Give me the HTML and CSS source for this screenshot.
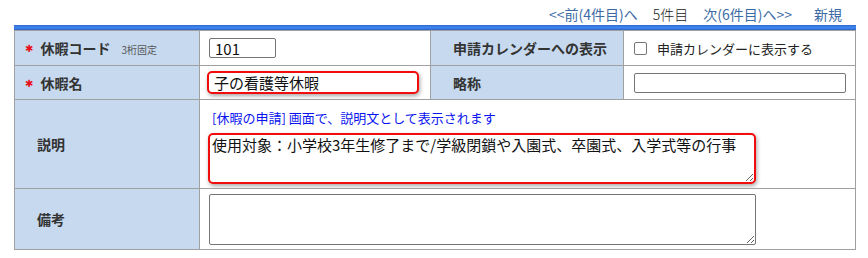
FILE: index.html
```html
<!DOCTYPE html>
<html lang="ja">
<head>
<meta charset="utf-8">
<link rel="stylesheet" href="styles.css">
</head>
<body>
<div class="page">
  <div class="nav">
    <a class="nav-link" href="#">&lt;&lt;前(4件目)へ</a>
    <span class="nav-current">5件目</span>
    <a class="nav-link" href="#">次(6件目)へ&gt;&gt;</a>
    <a class="nav-link nav-new" href="#">新規</a>
  </div>
  <div class="bar"></div>
  <table class="form">
    <colgroup>
      <col class="c1"><col class="c2"><col class="c3"><col class="c4">
    </colgroup>
    <tr class="r1">
      <th class="label req"><span class="ast">✱</span>休暇コード<span class="note">3桁固定</span></th>
      <td class="val"><input class="inp code" type="text" value="101"></td>
      <th class="label lbl3">申請カレンダーへの表示</th>
      <td class="val"><label class="chk"><span class="box"></span>申請カレンダーに表示する</label></td>
    </tr>
    <tr class="r2">
      <th class="label req"><span class="ast">✱</span>休暇名</th>
      <td class="val"><input class="inp name hl" type="text" value="子の看護等休暇"></td>
      <th class="label lbl3">略称</th>
      <td class="val"><input class="inp abbr" type="text" value=""></td>
    </tr>
    <tr class="r3">
      <th class="label">説明</th>
      <td class="val" colspan="3">
        <div class="hint">[休暇の申請] 画面で、説明文として表示されます</div>
        <textarea class="ta ta-hl">使用対象：小学校3年生修了まで/学級閉鎖や入園式、卒園式、入学式等の行事</textarea>
      </td>
    </tr>
    <tr class="r4">
      <th class="label">備考</th>
      <td class="val" colspan="3"><textarea class="ta"></textarea></td>
    </tr>
  </table>
</div>
</body>
</html>
```

FILE: styles.css
```css
html, body { margin: 0; padding: 0; background: #fff; }
body {
  font-family: "Noto Sans CJK JP", "Noto Sans", sans-serif;
  color: #333;
}
.page { padding-left: 14px; width: 842px; }
.nav {
  height: 25px;
  display: flex;
  justify-content: flex-end;
  align-items: center;
  font-size: 14px;
  line-height: 16px;
  padding-right: 14px;
  box-sizing: border-box;
  padding-top: 3px;
}
.nav-link { color: #3c6aa5; text-decoration: none; margin-left: 15px; }
.nav-current { color: #222; margin-left: 15px; font-weight: 300; }
.nav-new { margin-left: 22px; }
.bar {
  height: 5px;
  background: linear-gradient(#2e62c8, #3d86ef 40%, #3a7ce6 70%, #2b5fc2);
}
.form {
  border-collapse: collapse;
  table-layout: fixed;
  width: 842px;
  border: 1px solid #a0a0a0;
}
.form .c1 { width: 185px; }
.form .c2 { width: 231px; }
.form .c3 { width: 193px; }
.form .c4 { width: 232px; }
.form th, .form td {
  border: 1px solid #a0a0a0;
  padding: 0;
  vertical-align: middle;
}
.form tr.r1 th, .form tr.r1 td { border-top: 0; }
.r1 { height: 35px; }
.r2 { height: 34px; }
.r3 { height: 89px; }
.r4 { height: 61px; }
.label {
  background: #c6d9ef;
  text-align: left;
  font-size: 14px;
  font-weight: bold;
  color: #333;
  padding-left: 22px !important;
  white-space: nowrap;
}
.label.req { padding-left: 10px !important; }
.label.lbl3 { padding-left: 22px !important; }
.ast {
  color: #e8101a;
  margin-right: 7px;
  font-size: 10px;
  font-family: "DejaVu Sans", sans-serif;
  vertical-align: 2px;
}
.note { font-size: 10px; font-weight: normal; color: #555; margin-left: 11px; }
.val { padding-left: 9px !important; background: #fff; }
.inp {
  box-sizing: border-box;
  height: 20px;
  border: 1px solid #767676;
  border-radius: 2px;
  font-family: "Noto Sans CJK JP", "Noto Sans", sans-serif;
  font-size: 15px;
  color: #111;
  padding: 0 5px;
  display: block;
  margin: 0;
}
.code { width: 67px; }
.name { width: 212px; height: 23px; margin-left: -2px; }
.abbr { width: 212px; margin-left: 1px; }
.hl, .ta.ta-hl {
  border: 2px solid #f20d0d;
  border-radius: 5px;
  box-shadow: 1px 2px 4px rgba(0,0,0,0.35);
}
.chk {
  display: flex;
  align-items: center;
  font-size: 13px;
  color: #222;
  margin-left: 1px;
}
.box {
  width: 11px; height: 11px;
  border: 1px solid #767676;
  border-radius: 2px;
  margin-right: 10px;
  background: #fff;
}
.hint {
  color: #0a14f0;
  font-size: 13px;
  line-height: 16px;
  margin: 2px 0 7px 3px;
}
.r3 .val { padding-top: 8px !important; vertical-align: top; }
.ta {
  display: block;
  box-sizing: border-box;
  width: 547px;
  height: 51px;
  border: 1px solid #767676;
  border-radius: 2px;
  font-family: "Noto Sans CJK JP", "Noto Sans", sans-serif;
  font-size: 15px;
  line-height: 19px;
  color: #111;
  padding: 0 2px;
  margin: 0;
  resize: both;
  overflow: hidden;
}
.ta.ta-hl { margin-left: -1px; width: 548px; }
```
